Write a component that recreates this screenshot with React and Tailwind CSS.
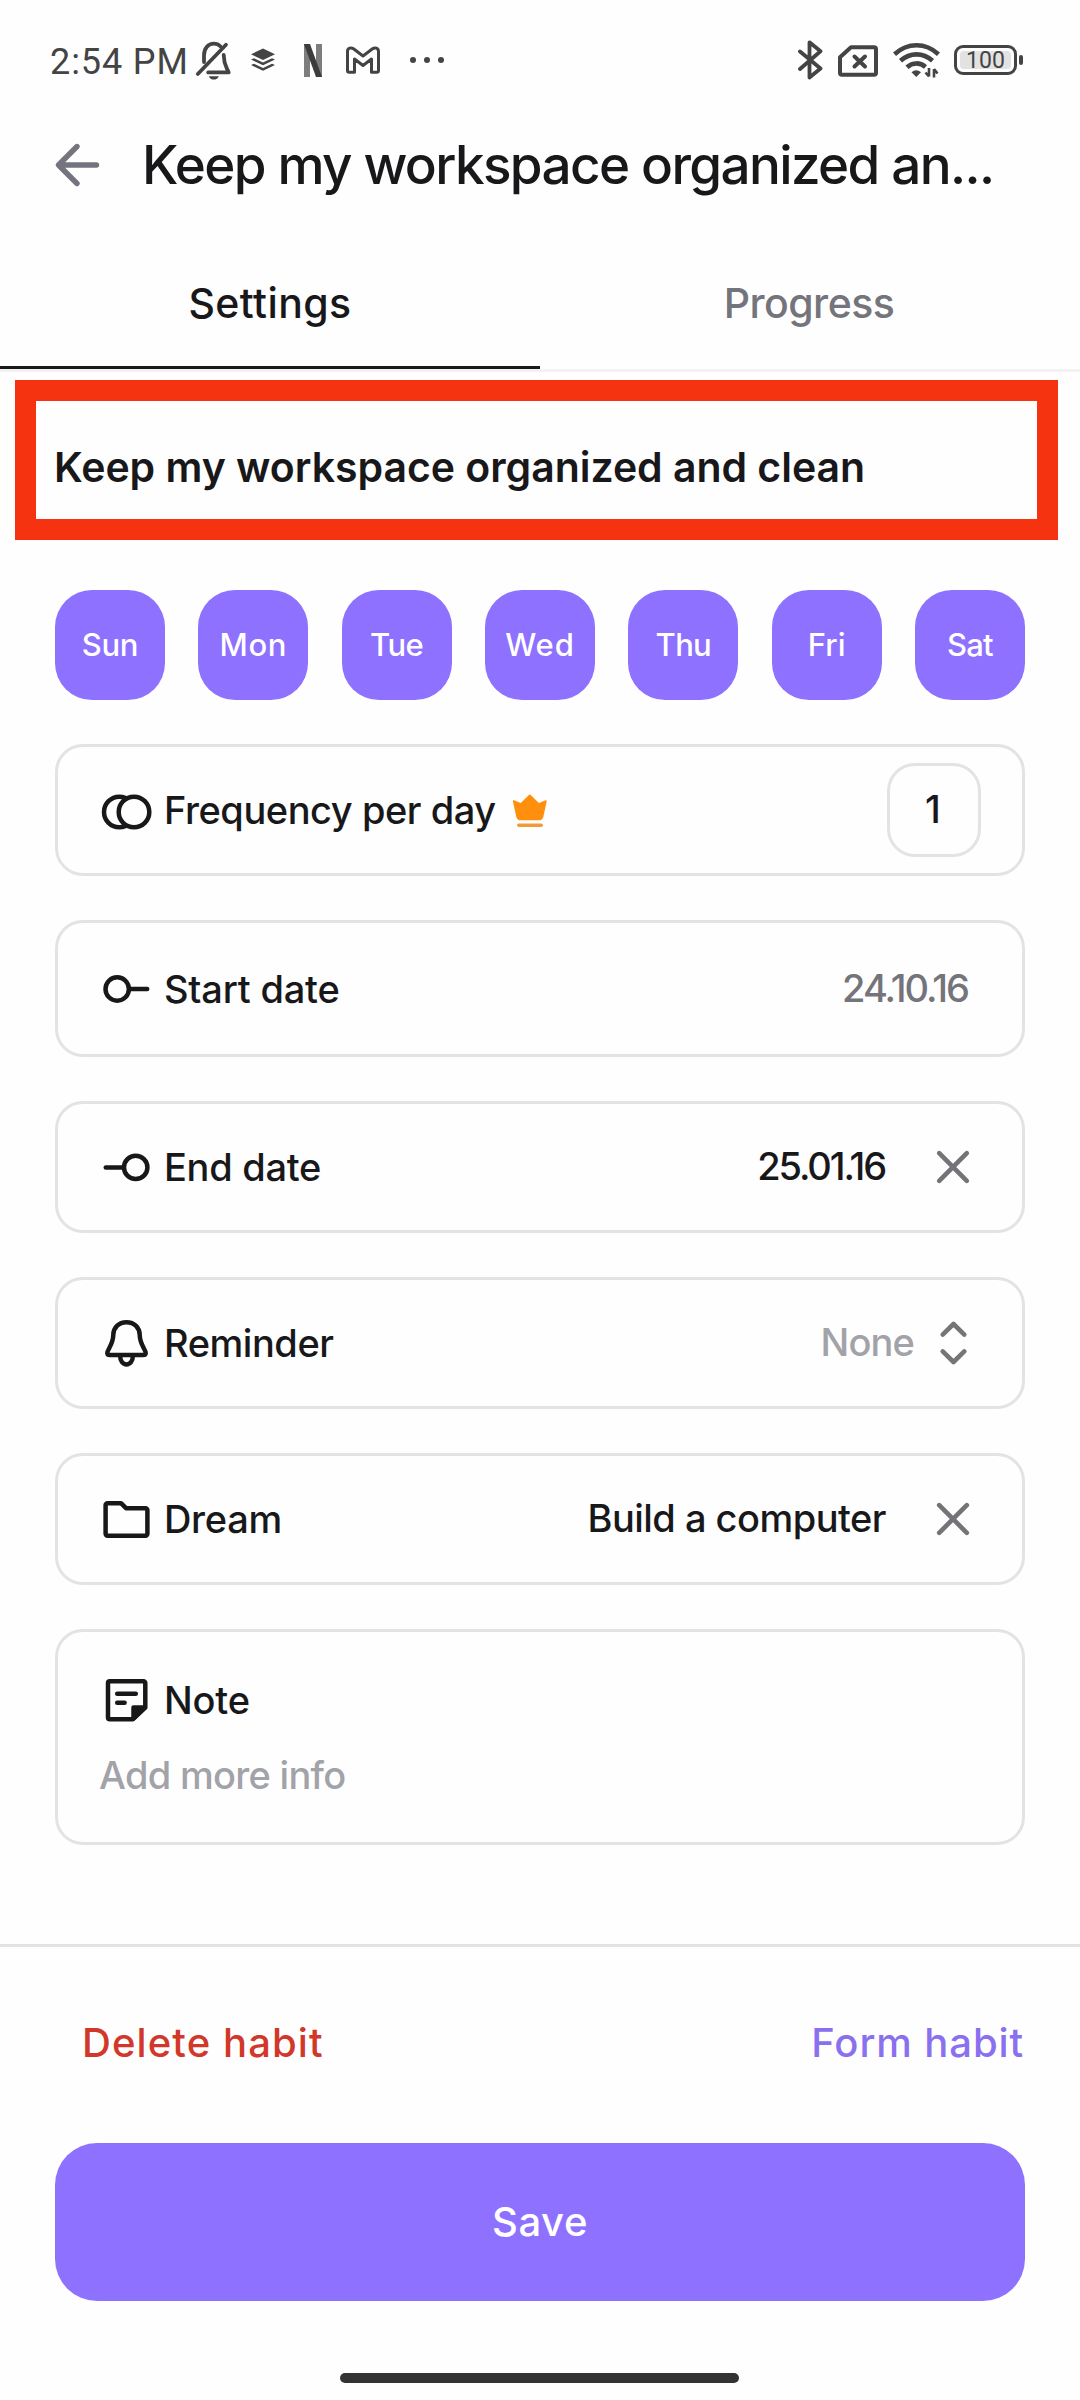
import React from "react";

const DAYS = [
  { label: "Sun", tracking: "tracking-[-0.34px]" },
  { label: "Mon", tracking: "tracking-[0.74px]" },
  { label: "Tue", tracking: "tracking-[-0.55px]" },
  { label: "Wed", tracking: "tracking-[0.88px]" },
  { label: "Thu", tracking: "tracking-[-0.69px]" },
  { label: "Fri", tracking: "tracking-[0.08px]" },
  { label: "Sat", tracking: "tracking-[-0.81px]" },
];

const RowIcon = ({ children }) => (
  <svg
    width="48"
    height="48"
    viewBox="0 0 48 48"
    fill="none"
    stroke="currentColor"
    strokeWidth="4.5"
    strokeLinecap="round"
    strokeLinejoin="round"
    className="shrink-0 overflow-visible"
  >
    {children}
  </svg>
);

const FrequencyIcon = () => (
  <RowIcon>
    <circle cx="17.3" cy="26" r="15.3" />
    <circle cx="32" cy="26" r="15.3" fill="#fefefe" />
  </RowIcon>
);

const StartIcon = () => (
  <RowIcon>
    <circle cx="15.2" cy="24" r="11.7" />
    <path d="M28 24h17.2" />
  </RowIcon>
);

const EndIcon = () => (
  <RowIcon>
    <circle cx="33.7" cy="24.4" r="11.7" />
    <path d="M3.8 24.4H21" />
  </RowIcon>
);

const BellIcon = () => (
  <RowIcon>
    <path d="M24.5 3.2c-8 0-13.1 5.6-13.2 12.6C11.2 25.5 5.3 30.5 5.3 34q0 2 2.6 2h33.2q2.6 0 2.6-2c0-3.5-5.9-8.5-6-18.2C37.6 8.8 32.5 3.2 24.5 3.2z" />
    <path d="M18.2 37.5c0 4.5 2.7 7.9 6.3 7.9s6.3-3.4 6.3-7.9" />
  </RowIcon>
);

const FolderIcon = () => (
  <RowIcon>
    <path d="M5.5 8.2H19l5 5h19.5a1.9 1.9 0 0 1 1.9 1.9v23.7a1.9 1.9 0 0 1-1.9 1.9h-38a1.9 1.9 0 0 1-1.9-1.9V10.1a1.9 1.9 0 0 1 1.9-1.9z" />
  </RowIcon>
);

const NoteIcon = () => (
  <RowIcon>
    <path d="M7.8 5.2h33.7a1.8 1.8 0 0 1 1.8 1.8v24.5L31 43.2H7.8A1.8 1.8 0 0 1 6 41.4V7a1.8 1.8 0 0 1 1.8-1.8z" />
    <path d="M31.5 31.5h11l-11 11z" fill="currentColor" />
    <path d="M15.2 17.7h18.6M15.2 26.7h7.4" />
  </RowIcon>
);

const CrownIcon = () => (
  <svg width="36" height="34" viewBox="0 0 36 34" className="shrink-0">
    <path
      d="M1.8 7.2 8.8 10.2 17.8 1.5l9 8.7 7-3-3.3 15.2q-.9 3-3.6 3H8.7q-2.700 0-3.600-3z"
      fill="#ff8f0c"
      stroke="#ff8f0c"
      strokeWidth="1.8"
      strokeLinejoin="round"
    />
    <path d="M6.8 31.2h22.4" stroke="#f29a3a" strokeWidth="3.5" strokeLinecap="round" />
  </svg>
);

const ClearIcon = () => (
  <svg width="48" height="48" viewBox="0 0 48 48" className="shrink-0">
    <path d="M10.2 10.2 37.8 37.8M37.8 10.2 10.2 37.8" stroke="#737378" strokeWidth="4.6" strokeLinecap="round" />
  </svg>
);

const SelectIcon = () => (
  <svg width="48" height="48" viewBox="0 0 48 48" fill="none" className="shrink-0">
    <path
      d="M13.7 15.6 24.5 5l10.8 10.6M13.7 32.4 24.5 43l10.8-10.6"
      stroke="#757578"
      strokeWidth="4.6"
      strokeLinecap="round"
      strokeLinejoin="round"
    />
  </svg>
);

const StatusBar = () => (
  <div className="flex h-[120px] shrink-0 items-center pl-[50px] text-[#444444]">
    <span className="w-[144px] pt-[3px] whitespace-nowrap font-['Roboto'] text-[36px] leading-[40px] tracking-[0.9px]">
      2:54 PM
    </span>
    {/* Silent mode */}
    <svg width="40" height="40" viewBox="0 0 40 40" fill="none" stroke="currentColor" strokeWidth="3.8" strokeLinecap="round" strokeLinejoin="round">
      <path d="M3.8 34 32 4.8" />
      <path d="M10 22V15.5C10 8 14.5 3.7 19.8 3.7c2.6 0 5 1 6.8 2.8" />
      <path d="M29.7 15c.2 9.5 2 10.6 5 17.4H14.2" />
      <path d="M14.8 36.2h10c-.9 2.1-2.7 3.4-5 3.4s-4.100-1.300-5-3.400z" fill="currentColor" stroke="none" />
    </svg>
    {/* Buffer */}
    <svg width="24" height="24" viewBox="0 0 24 24" fill="currentColor" className="ml-[17px]">
      <path d="M12 .5 24 6.3 12 12 0 6.3z" />
      <path d="M0 11.5 3 10.2l9 4.3 9-4.3 3 1.3L12 17.3z" />
      <path d="M0 17 3 15.7l9 4.3 9-4.3L24 17l-12 5.8z" />
    </svg>
    {/* Netflix */}
    <svg width="18" height="33" viewBox="0 0 18 33" className="ml-[29px]">
      <path d="M0 0h6v33H0zM12 0h6v33h-6z" fill="#7d7d7d" />
      <path d="M0 0h6l12 33h-6z" fill="#3c3c3c" />
    </svg>
    {/* Gmail */}
    <svg width="34" height="28" viewBox="0 0 34 28" fill="none" stroke="currentColor" strokeWidth="3" strokeLinejoin="round" className="ml-[24px]">
      <path d="M8.5 26.2H3.3q-1.8 0-1.8-1.8V5.5C1.5 2 5 1 7.5 2.8L17 10l9.5-7.2C29 1 32.5 2 32.5 5.5v18.9q0 1.8-1.8 1.8h-5.2V13L17 19.5 8.5 13z" />
    </svg>
    <div className="ml-[30px] flex gap-2">
      <i className="size-[6px] rounded-full bg-[#444444]" />
      <i className="size-[6px] rounded-full bg-[#444444]" />
      <i className="size-[6px] rounded-full bg-[#444444]" />
    </div>
    <div className="mr-[57px] ml-auto flex items-center">
      {/* Bluetooth */}
      <svg width="25" height="40" viewBox="0 0 25 40" fill="none" stroke="currentColor" strokeWidth="3.8" strokeLinecap="round" strokeLinejoin="round">
        <path d="M2 11.5 22.5 28.5 11.5 37.5V2.3l11 9L2 29" />
      </svg>
      {/* No SIM */}
      <svg width="40" height="32" viewBox="0 0 40 32" fill="none" stroke="currentColor" strokeWidth="4" strokeLinejoin="round" className="mt-[2px] ml-[15px]">
        <path d="M13 2.3h23a2 2 0 0 1 2 2v23.4a2 2 0 0 1-2 2H4a2 2 0 0 1-2-2V12.3z" />
        <path d="m16.5 11.5 10.5 10M27 11.500l-10.500 10" strokeLinecap="round" />
      </svg>
      {/* Wi-Fi */}
      <svg width="47" height="36" viewBox="0 0 47 36" fill="none" stroke="currentColor" strokeWidth="4.6" className="ml-[15px]">
        <path d="M1.5 12.2C14.5.2 32.5.2 45.5 12.2" />
        <path d="M7.5 18.8c9.6-8.6 22.4-8.6 32 0" />
        <path d="M14 25.2c5.6-5 13-5 18.5-.2" />
        <path d="M18.5 30.3q4.7-4 9.5 0L23.3 35z" fill="currentColor" stroke="none" />
        <path d="M36 26v8.5M32.5 30.5l3.5 4M41 35.5V27M44.5 31.5l-3.5-4.5" strokeWidth="2.6" />
      </svg>
      {/* Battery */}
      <div className="ml-[14px] flex h-[30px] w-[63px] items-center justify-center rounded-[9px] border-[3px] border-[#444444] p-[3px]">
        <div className="flex h-full w-full items-center justify-center rounded-[4px] bg-[#e2e2e2] pt-[2px] font-['Roboto'] text-[23px] leading-[18px]">
          100
        </div>
      </div>
      <i className="ml-[2px] h-[10px] w-[4px] rounded-[2px] bg-[#444444]" />
    </div>
  </div>
);

const Header = () => (
  <div className="flex h-[89px] shrink-0 items-center pl-[53px]">
    <svg width="48" height="48" viewBox="0 0 48 48" fill="none" className="shrink-0">
      <path
        d="M24 5.5 5.5 24 24 42.5M6.5 24h37"
        stroke="#74747e"
        strokeWidth="5.4"
        strokeLinecap="round"
        strokeLinejoin="round"
      />
    </svg>
    <h1 className="ml-[41px] whitespace-nowrap text-[53px] leading-[64px] font-medium tracking-[-1.62px]">
      Keep my workspace organized an...
    </h1>
  </div>
);

const Tabs = () => (
  <div className="flex h-[163px] shrink-0 border-b-[3px] border-[#f2f2f2] text-[41px] font-medium">
    <div className="flex w-1/2 items-center justify-center border-b-[3px] border-[#1a1a1c] pt-[32px] tracking-[0.4px]">
      Settings
    </div>
    <div className="flex w-1/2 items-center justify-center border-b-[3px] border-transparent pt-[32px] pr-[2px] tracking-[-0.54px] text-[#74747c]">
      Progress
    </div>
  </div>
);

const Card = ({ icon, label, height = "h-[132px]", tracking, extra, children }) => (
  <div className={`flex items-center rounded-[28px] border-[3px] border-[#e3e3e4] pl-[44px] ${height}`}>
    {icon}
    <span className={`ml-[14px] whitespace-nowrap ${tracking}`}>{label}</span>
    {extra}
    <div className="ml-auto flex items-center">{children}</div>
  </div>
);

export default function App() {
  return (
    <div className="flex h-[2400px] w-[1080px] flex-col overflow-hidden bg-[#fefefe] font-['Inter',sans-serif] text-[#18181b]">
      <StatusBar />
      <Header />
      <Tabs />

      {/* Habit title */}
      <div className="mt-[8px] mr-[22px] ml-[15px] flex h-[160px] shrink-0 items-center border-[21px] border-[#f63310] pt-[13px] pl-[18px]">
        <h2 className="whitespace-nowrap text-[41px] leading-[48px] font-semibold tracking-[-0.03px]">
          Keep my workspace organized and clean
        </h2>
      </div>

      <div className="mx-[55px] mt-[50px] flex shrink-0 justify-between">
        {DAYS.map(({ label, tracking }) => (
          <div
            key={label}
            className={`flex size-[110px] items-center justify-center rounded-[37px] bg-[#8e71ff] text-[31px] font-medium text-white ${tracking}`}
          >
            {label}
          </div>
        ))}
      </div>

      <div className="mx-[55px] mt-[44px] flex shrink-0 flex-col gap-[44px] text-[38px] leading-[48px] font-medium">
        <Card
          icon={<FrequencyIcon />}
          label="Frequency per day"
          tracking="tracking-[-0.45px]"
          extra={<div className="mt-[2px] ml-[16px]"><CrownIcon /></div>}
        >
          <div className="mr-[41px] flex size-[94px] items-center justify-center rounded-[28px] border-[3px] border-[#e3e3e4] pr-[2px] pb-[2px]">
            1
          </div>
        </Card>

        <Card icon={<StartIcon />} label="Start date" height="h-[137px]" tracking="tracking-[-0.2px]">
          <span className="mr-[54px] pb-[1px] tracking-[-1.99px] text-[#74747a]">24.10.16</span>
        </Card>

        <Card icon={<EndIcon />} label="End date" tracking="tracking-[-0.3px]">
          <span className="mr-[44px] pb-[2px] tracking-[-2.1px]">25.01.16</span>
          <div className="mr-[45px]"><ClearIcon /></div>
        </Card>

        <Card icon={<BellIcon />} label="Reminder" tracking="tracking-[-0.45px]">
          <span className="mr-[15px] pb-[2px] tracking-[-0.85px] text-[#a2a2a9]">None</span>
          <div className="mr-[45px]"><SelectIcon /></div>
        </Card>

        <Card icon={<FolderIcon />} label="Dream" tracking="tracking-[-0.3px]">
          <span className="mr-[43px] pb-[2px] tracking-[-0.52px]">Build a computer</span>
          <div className="mr-[45px]"><ClearIcon /></div>
        </Card>

        <div className="flex h-[216px] flex-col rounded-[28px] border-[3px] border-[#e3e3e4] pt-[44px] pl-[41px]">
          <div className="flex items-center pl-[3px]">
            <NoteIcon />
            <span className="ml-[14px] tracking-[-0.2px]">Note</span>
          </div>
          <p className="mt-[27px] tracking-[-0.7px] text-[#a2a2a9]">Add more info</p>
        </div>
      </div>

      <div className="mt-[99px] flex flex-1 flex-col border-t-[3px] border-[#e3e3e4] text-[40px] leading-[48px] font-medium">
        <div className="mt-[72px] flex justify-between pr-[56px] pl-[82px]">
          <button className="tracking-[1.1px] text-[#d2382a]">Delete habit</button>
          <button className="tracking-[0.9px] text-[#8a70ee]">Form habit</button>
        </div>
        <button className="mx-[55px] mt-[76px] h-[158px] rounded-[42px] bg-[#8e71ff] tracking-[0.6px] text-white">
          Save
        </button>
        <div className="mr-auto ml-[340px] mt-[72px] h-[10px] w-[399px] rounded-full bg-[#333333]" />
      </div>
    </div>
  );
}
